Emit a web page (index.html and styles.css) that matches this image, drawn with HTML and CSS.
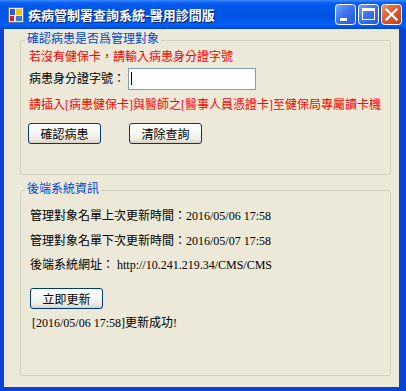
FILE: index.html
```html
<!DOCTYPE html>
<html lang="zh-Hant">
<head>
<meta charset="utf-8">
<title>疾病管制署查詢系統-醫用診間版</title>
<link rel="stylesheet" href="styles.css">
</head>
<body>
<div class="window">
  <div class="titlebar">
    <svg class="app-icon" width="16" height="16" viewBox="0 0 16 16">
      <rect x="0.5" y="0.5" width="15" height="15" fill="#e8e8f0" stroke="#5a6e9c"/>
      <rect x="2" y="2" width="5" height="6" fill="#2a5bd0"/>
      <rect x="2" y="9" width="4" height="5" fill="#d81e1e"/>
      <rect x="8" y="2" width="6" height="6" fill="#f5c400"/>
      <rect x="8" y="9" width="6" height="5" fill="#3a78e0"/>
    </svg>
    <span class="title">疾病管制署查詢系統-醫用診間版</span>
    <div class="controls">
      <svg class="ctl" width="21" height="21" viewBox="0 0 21 21">
        <defs>
          <linearGradient id="gb" x1="0" y1="0" x2="1" y2="1">
            <stop offset="0" stop-color="#7aa6fb"/>
            <stop offset="0.45" stop-color="#3f74ee"/>
            <stop offset="1" stop-color="#2455d4"/>
          </linearGradient>
        </defs>
        <rect x="0.5" y="0.5" width="20" height="20" rx="3" fill="url(#gb)" stroke="#fff"/>
        <rect x="5" y="14" width="7" height="3" fill="#fff"/>
      </svg>
      <svg class="ctl" width="21" height="21" viewBox="0 0 21 21">
        <rect x="0.5" y="0.5" width="20" height="20" rx="3" fill="url(#gb)" stroke="#fff"/>
        <rect x="4.5" y="4.5" width="12" height="11" fill="none" stroke="#fff"/>
        <rect x="4" y="4" width="13" height="3" fill="#fff"/>
      </svg>
      <svg class="ctl" width="21" height="21" viewBox="0 0 21 21">
        <defs>
          <linearGradient id="gr" x1="0" y1="0" x2="1" y2="1">
            <stop offset="0" stop-color="#f0906c"/>
            <stop offset="0.45" stop-color="#e05a32"/>
            <stop offset="1" stop-color="#c2401c"/>
          </linearGradient>
        </defs>
        <rect x="0.5" y="0.5" width="20" height="20" rx="3" fill="url(#gr)" stroke="#fff"/>
        <path d="M5.5 5.5 L15.5 15.5 M15.5 5.5 L5.5 15.5" stroke="#fff" stroke-width="2.2" stroke-linecap="square"/>
      </svg>
    </div>
  </div>
  <div class="client">
    <div class="group g1">
      <div class="legend">確認病患是否爲管理對象</div>
      <p class="line red r1">若沒有健保卡，請輸入病患身分證字號</p>
      <div class="idrow">
        <span class="label">病患身分證字號：</span>
        <div class="textbox"><span class="caret"></span></div>
      </div>
      <p class="line red r3">請插入[病患健保卡]與醫師之[醫事人員憑證卡]至健保局專屬讀卡機</p>
      <div class="btnrow">
        <button class="btn">確認病患</button>
        <button class="btn">清除查詢</button>
      </div>
    </div>
    <div class="group g2">
      <div class="legend">後端系統資訊</div>
      <p class="line info i1">管理對象名單上次更新時間：2016/05/06 17:58</p>
      <p class="line info i2">管理對象名單下次更新時間：2016/05/07 17:58</p>
      <p class="line info i3">後端系統網址： http://10.241.219.34/CMS/CMS</p>
      <button class="btn update">立即更新</button>
      <p class="line status">[2016/05/06 17:58]更新成功!</p>
    </div>
  </div>
</div>
</body>
</html>
```

FILE: styles.css
```css
* { box-sizing: border-box; }
html, body { margin: 0; padding: 0; }
body {
  width: 406px;
  height: 391px;
  overflow: hidden;
  font-family: "Liberation Serif", "Noto Sans CJK TC", serif;
  font-size: 12px;
  color: #000;
}
.window {
  width: 406px;
  height: 391px;
  display: flex;
  flex-direction: column;
  background: #0842d8;
}
.titlebar {
  height: 29px;
  flex: none;
  display: flex;
  align-items: center;
  padding-left: 8px;
  background: linear-gradient(to bottom, #3a8cff 0px, #0a5cf2 3px, #0056e6 8px, #0054e3 18px, #0060f8 25px, #0044c8 29px);
}
.app-icon { flex: none; }
.title {
  margin-left: 4px;
  color: #fff;
  font-family: "Noto Sans CJK TC", sans-serif;
  font-weight: 700;
  font-size: 13px;
  line-height: 16px;
  text-shadow: 1px 1px 0 #0a1e6e;
  letter-spacing: 0;
}
.controls {
  margin-left: auto;
  margin-right: 4px;
  display: flex;
  gap: 2px;
  margin-top: 0;
}
.ctl { display: block; }
.client {
  flex: 1;
  margin: 0 7px 4px 4px;
  background: #ece9d8;
  padding: 11px 0 0 16px;
}
.group {
  width: 371px;
  border: 1px solid #d0d0bf;
  border-radius: 3px;
  padding: 0 8px;
}
.g1 { height: 135px; }
.g2 { height: 186px; margin-top: 15px; }
.legend {
  width: fit-content;
  height: 14px;
  line-height: 14px;
  margin: -10px 0 0 -4px;
  padding: 0 2px;
  background: #ece9d8;
  color: #0046d5;
  font-family: "Noto Sans CJK TC", sans-serif;
}
.line {
  margin: 0;
  height: 16px;
  line-height: 16px;
  white-space: nowrap;
}
.red { color: #ff0000; }
.r1 { margin-top: 4px; }
.idrow {
  margin-top: 3px;
  height: 22px;
  display: flex;
  align-items: center;
}
.label { width: 96px; line-height: 16px; }
.textbox {
  margin-left: 3px;
  width: 128px;
  height: 22px;
  border: 1px solid #7f9db9;
  background: #fff;
  padding: 3px 0 0 2px;
}
.caret {
  display: block;
  width: 1px;
  height: 13px;
  background: #000;
}
.r3 { margin-top: 7px; }
.btnrow {
  margin-top: 10px;
  display: flex;
  gap: 28px;
  margin-left: -1px;
}
.btn {
  display: block;
  width: 73px;
  height: 21px;
  padding: 0;
  border: 1px solid #003c74;
  border-radius: 3px;
  background: linear-gradient(to bottom, #ffffff 0%, #f7f7f3 45%, #ecebe4 80%, #d6d0c5 100%);
  font-family: "Noto Sans CJK TC", sans-serif;
  font-size: 12px;
  line-height: 17px;
  color: #000;
}
.info { padding-left: 1px; }
.i1 { margin-top: 13px; }
.i2 { margin-top: 9px; }
.i3 { margin-top: 8px; }
.update { margin-top: 15px; margin-left: 1px; }
.status { margin-top: 6px; padding-left: 3px; }
```
